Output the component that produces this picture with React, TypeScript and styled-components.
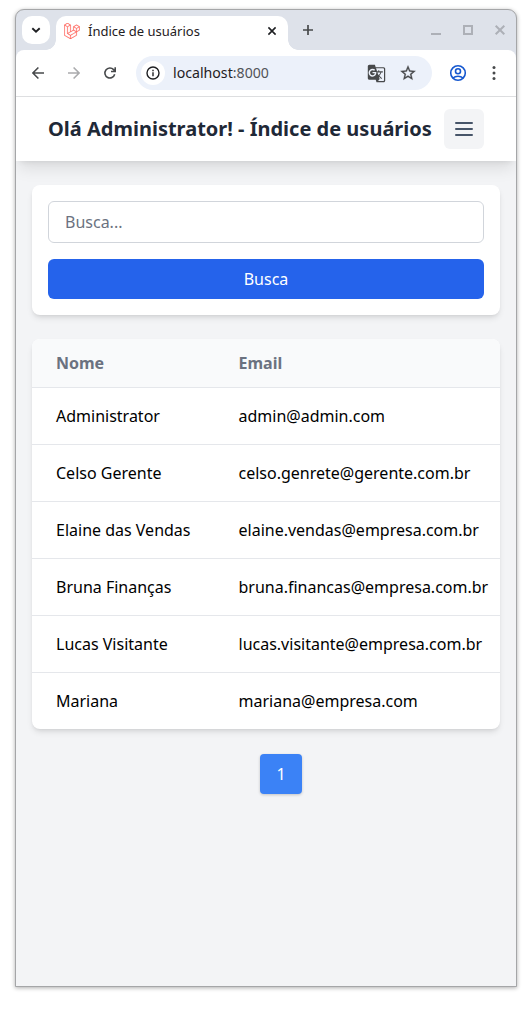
import React from 'react';
import styled, { createGlobalStyle } from 'styled-components';
import { SiLaravel } from 'react-icons/si';
import { MdGTranslate, MdStarBorder } from 'react-icons/md';

const GlobalStyle = createGlobalStyle`
  *, *::before, *::after { box-sizing: border-box; }
  body {
    margin: 0;
    background: #fff;
    font-family: 'Noto Sans', sans-serif;
    font-size: 16px;
    line-height: 24px;
    color: #000;
  }
  button, input { font: inherit; }
  h1 { margin: 0; }
`;

const Desktop = styled.div`
  height: 1018px;
  padding: 9px 15px 31px;
  overflow: hidden;
`;

const BrowserWindow = styled.div`
  width: 502px;
  height: 978px;
  display: flex;
  flex-direction: column;
  border: 1px solid #a5a6a8;
  border-radius: 9px 9px 0 0;
  overflow: hidden;
  background: #dee2ea;
  box-shadow: 0 1px 4px rgba(0, 0, 0, 0.32);
`;

const TabStrip = styled.div`
  height: 40px;
  flex: none;
  display: flex;
  align-items: flex-start;
  padding: 6px 8px 0 6px;
`;

const TabSearch = styled.button`
  width: 28px;
  height: 28px;
  margin-right: 6px;
  padding: 0;
  border: 0;
  border-radius: 10px;
  background: #fff;
  color: #1f2023;
  display: grid;
  place-items: center;
`;

const Tab = styled.div`
  position: relative;
  width: 232px;
  height: 34px;
  display: flex;
  align-items: center;
  padding: 0 8px 5px 8px;
  border-radius: 10px 10px 0 0;
  background: #fff;
  color: #1f2023;
  line-height: 18px;

  &::before,
  &::after {
    content: '';
    position: absolute;
    bottom: 0;
    width: 10px;
    height: 10px;
  }
  &::before {
    left: -10px;
    background: radial-gradient(circle at 0 0, transparent 9.5px, #fff 10px);
  }
  &::after {
    right: -10px;
    background: radial-gradient(circle at 100% 0, transparent 9.5px, #fff 10px);
  }
`;

const TabTitle = styled.span`
  flex: 1;
  margin-left: 8px;
  font-size: 13px;
`;

const TabIcon = styled.span<{ $color: string }>`
  display: flex;
  color: ${(p) => p.$color};
`;

const LaravelMark = styled(SiLaravel)`
  stroke: currentColor;
  stroke-width: 0.35px;
`;

const NewTab = styled.div`
  width: 20px;
  height: 28px;
  margin-left: 10px;
  display: grid;
  place-items: center;
  color: #47494b;
`;

const WindowControls = styled.div`
  height: 28px;
  margin-left: auto;
  display: flex;
  align-items: center;
  gap: 16px;
  color: #adb0b7;
  svg { display: block; }
`;

const Toolbar = styled.div`
  height: 47px;
  flex: none;
  display: flex;
  align-items: center;
  padding: 0 12px;
  border-bottom: 1px solid #dedfe1;
  border-radius: 8px 8px 0 0;
  background: #fff;
`;

const NavButton = styled.button<{ $color?: string }>`
  width: 20px;
  height: 20px;
  padding: 0;
  border: 0;
  background: none;
  display: grid;
  place-items: center;
  color: ${(p) => p.$color ?? '#47494b'};
  & + & { margin-left: 16px; }
`;

const AddressBar = styled.div`
  width: 296px;
  height: 34px;
  margin: 0 16px;
  display: flex;
  align-items: center;
  padding: 0 14px 0 5px;
  border-radius: 17px;
  background: #ecf1fa;
  color: #1f2023;
`;

const SiteInfo = styled.span`
  width: 24px;
  height: 24px;
  display: grid;
  place-items: center;
  border-radius: 50%;
  background: #fff;
`;

const Url = styled.span`
  flex: 1;
  margin-left: 8px;
  font-size: 14.15px;
  line-height: 20px;
`;

const Port = styled.span`
  color: #515357;
`;

const AddressActions = styled.div`
  display: flex;
  gap: 12px;
  ${NavButton} { margin-left: 0; }
`;

const StarIcon = styled(MdStarBorder)`
  path:last-child {
    stroke: currentColor;
    stroke-width: 0.4px;
  }
`;

const Page = styled.div`
  flex: 1;
  background: #f3f4f6;
`;

const Header = styled.header`
  height: 64px;
  display: flex;
  align-items: center;
  justify-content: space-between;
  padding: 0 32px;
  background: #fff;
  box-shadow: 0 10px 15px -3px rgba(0, 0, 0, 0.1), 0 4px 6px -4px rgba(0, 0, 0, 0.1);
`;

const Title = styled.h1`
  font-size: 20px;
  line-height: 28px;
  font-weight: 700;
  color: #1f2937;
  white-space: nowrap;
`;

const MenuButton = styled.button`
  width: 40px;
  height: 40px;
  padding: 0;
  border: 0;
  border-radius: 6px;
  background: #f3f4f6;
  color: #475569;
  display: grid;
  place-items: center;
`;

const Main = styled.main`
  display: flex;
  flex-direction: column;
  gap: 24px;
  padding: 24px 16px;
`;

const Card = styled.section`
  border-radius: 8px;
  overflow: hidden;
  background: #fff;
  box-shadow: 0 4px 6px -1px rgba(0, 0, 0, 0.1), 0 2px 4px -2px rgba(0, 0, 0, 0.1);
`;

const SearchForm = styled.form`
  display: flex;
  flex-direction: column;
  gap: 16px;
  padding: 16px;
`;

const SearchInput = styled.input`
  width: 100%;
  height: 42px;
  padding: 8px 16px;
  border: 1px solid #d1d5db;
  border-radius: 6px;
  outline: 0;
  background: #fff;
  &::placeholder { color: #6b7280; opacity: 1; }
`;

const SearchButton = styled.button`
  height: 40px;
  padding: 0;
  border: 0;
  border-radius: 6px;
  background: #2563eb;
  color: #fff;
`;

const Table = styled.table`
  width: 100%;
  table-layout: fixed;
  border-spacing: 0;
  text-align: left;
  white-space: nowrap;
`;

const HeadCell = styled.th<{ $width?: string }>`
  width: ${(p) => p.$width ?? 'auto'};
  padding: 12px 0 12px 24px;
  border-bottom: 1px solid #e5e7eb;
  background: #f9fafb;
  color: #6b7280;
  font-weight: 700;
`;

const Cell = styled.td`
  padding: 16px 0 16px 24px;
  border-bottom: 1px solid #e5e7eb;
  tr:last-child > & { border-bottom: 0; }
`;

const Pagination = styled.nav`
  display: flex;
  justify-content: center;
  padding: 1px 0 0 30px;
`;

const PageButton = styled.button`
  width: 42px;
  height: 40px;
  padding: 0;
  border: 0;
  border-radius: 4px;
  background: #3b82f6;
  color: #fff;
  box-shadow: 0 1px 3px rgba(0, 0, 0, 0.2);
`;

const users = [
  ['Administrator', 'admin@admin.com'],
  ['Celso Gerente', 'celso.genrete@gerente.com.br'],
  ['Elaine das Vendas', 'elaine.vendas@empresa.com.br'],
  ['Bruna Finanças', 'bruna.financas@empresa.com.br'],
  ['Lucas Visitante', 'lucas.visitante@empresa.com.br'],
  ['Mariana', 'mariana@empresa.com'],
];

type GlyphProps = {
  d: string;
  weight?: number;
};

const Glyph = ({ d, weight = 1.6 }: GlyphProps) => (
  <svg
    width="16"
    height="16"
    viewBox="0 0 16 16"
    fill="none"
    stroke="currentColor"
    strokeWidth={weight}
  >
    <path d={d} />
  </svg>
);

export default function App() {
  return (
    <Desktop>
      <GlobalStyle />
      <BrowserWindow>
        <TabStrip>
          <TabSearch aria-label="Pesquisar guias">
            <Glyph d="M4.3 6.2 8 9.7l3.7-3.5" weight={1.9} />
          </TabSearch>
          <Tab>
            <TabIcon $color="#ff5a50">
              <LaravelMark size={16} />
            </TabIcon>
            <TabTitle>Índice de usuários</TabTitle>
            <TabIcon $color="#1f2023">
              <Glyph d="m4.4 4.4 7.2 7.2m0-7.2-7.2 7.2" weight={1.6} />
            </TabIcon>
          </Tab>
          <NewTab>
            <Glyph d="M8 3v10M3 8h10" weight={1.7} />
          </NewTab>
          <WindowControls>
            <Glyph d="M3 12h10" weight={2} />
            <Glyph d="M4 4h8v8H4z" weight={2} />
            <Glyph d="m3.7 3.7 8.6 8.6m0-8.6-8.6 8.6" weight={2} />
          </WindowControls>
        </TabStrip>

        <Toolbar>
          <NavButton aria-label="Voltar">
            <Glyph d="M14 8H3m5.4-5.5L2.9 8l5.5 5.5" />
          </NavButton>
          <NavButton aria-label="Avançar" $color="#aaabad">
            <Glyph d="M2 8h11M7.6 2.5 13.1 8l-5.5 5.5" />
          </NavButton>
          <NavButton aria-label="Recarregar">
            <Glyph d="M12.7 9.3A5 5 0 1 1 11.6 4.6L13 6M13.2 2.3v4.2H9" />
          </NavButton>
          <AddressBar>
            <SiteInfo>
              <svg width="16" height="16" viewBox="0 0 16 16" fill="none" stroke="currentColor" strokeWidth="1.4">
                <circle cx="8" cy="8" r="6" />
                <path d="M8 7.3v3.9M8 4.7v1.5" />
              </svg>
            </SiteInfo>
            <Url>
              localhost<Port>:8000</Port>
            </Url>
            <AddressActions>
              <NavButton aria-label="Traduzir">
                <MdGTranslate size={19} />
              </NavButton>
              <NavButton aria-label="Favoritar">
                <StarIcon size={18} />
              </NavButton>
            </AddressActions>
          </AddressBar>
          <NavButton aria-label="Perfil" $color="#1658cf">
            <svg width="18" height="18" viewBox="0 0 18 18" fill="none" stroke="currentColor" strokeWidth="1.6">
              <circle cx="9" cy="9" r="7.3" />
              <circle cx="9" cy="7.3" r="2.5" />
              <path d="M3.9 14c2.8-2.4 7.4-2.4 10.2 0" />
            </svg>
          </NavButton>
          <NavButton aria-label="Mais opções">
            <svg width="16" height="16" viewBox="0 0 16 16" fill="currentColor">
              <circle cx="8" cy="2.6" r="1.5" />
              <circle cx="8" cy="8" r="1.5" />
              <circle cx="8" cy="13.4" r="1.5" />
            </svg>
          </NavButton>
        </Toolbar>

        <Page>
          <Header>
            <Title>Olá Administrator! - Índice de usuários</Title>
            <MenuButton aria-label="Menu">
              <svg width="24" height="24" viewBox="0 0 24 24" stroke="currentColor" strokeWidth="2" strokeLinecap="round">
                <path d="M4 6h16M4 12h16M4 18h16" />
              </svg>
            </MenuButton>
          </Header>
          <Main>
            <Card>
              <SearchForm>
                <SearchInput placeholder="Busca..." />
                <SearchButton type="button">Busca</SearchButton>
              </SearchForm>
            </Card>
            <Card>
              <Table>
                <thead>
                  <tr>
                    <HeadCell $width="182.5px">Nome</HeadCell>
                    <HeadCell>Email</HeadCell>
                  </tr>
                </thead>
                <tbody>
                  {users.map(([name, email]) => (
                    <tr key={email}>
                      <Cell>{name}</Cell>
                      <Cell>{email}</Cell>
                    </tr>
                  ))}
                </tbody>
              </Table>
            </Card>
            <Pagination>
              <PageButton>1</PageButton>
            </Pagination>
          </Main>
        </Page>
      </BrowserWindow>
    </Desktop>
  );
}
